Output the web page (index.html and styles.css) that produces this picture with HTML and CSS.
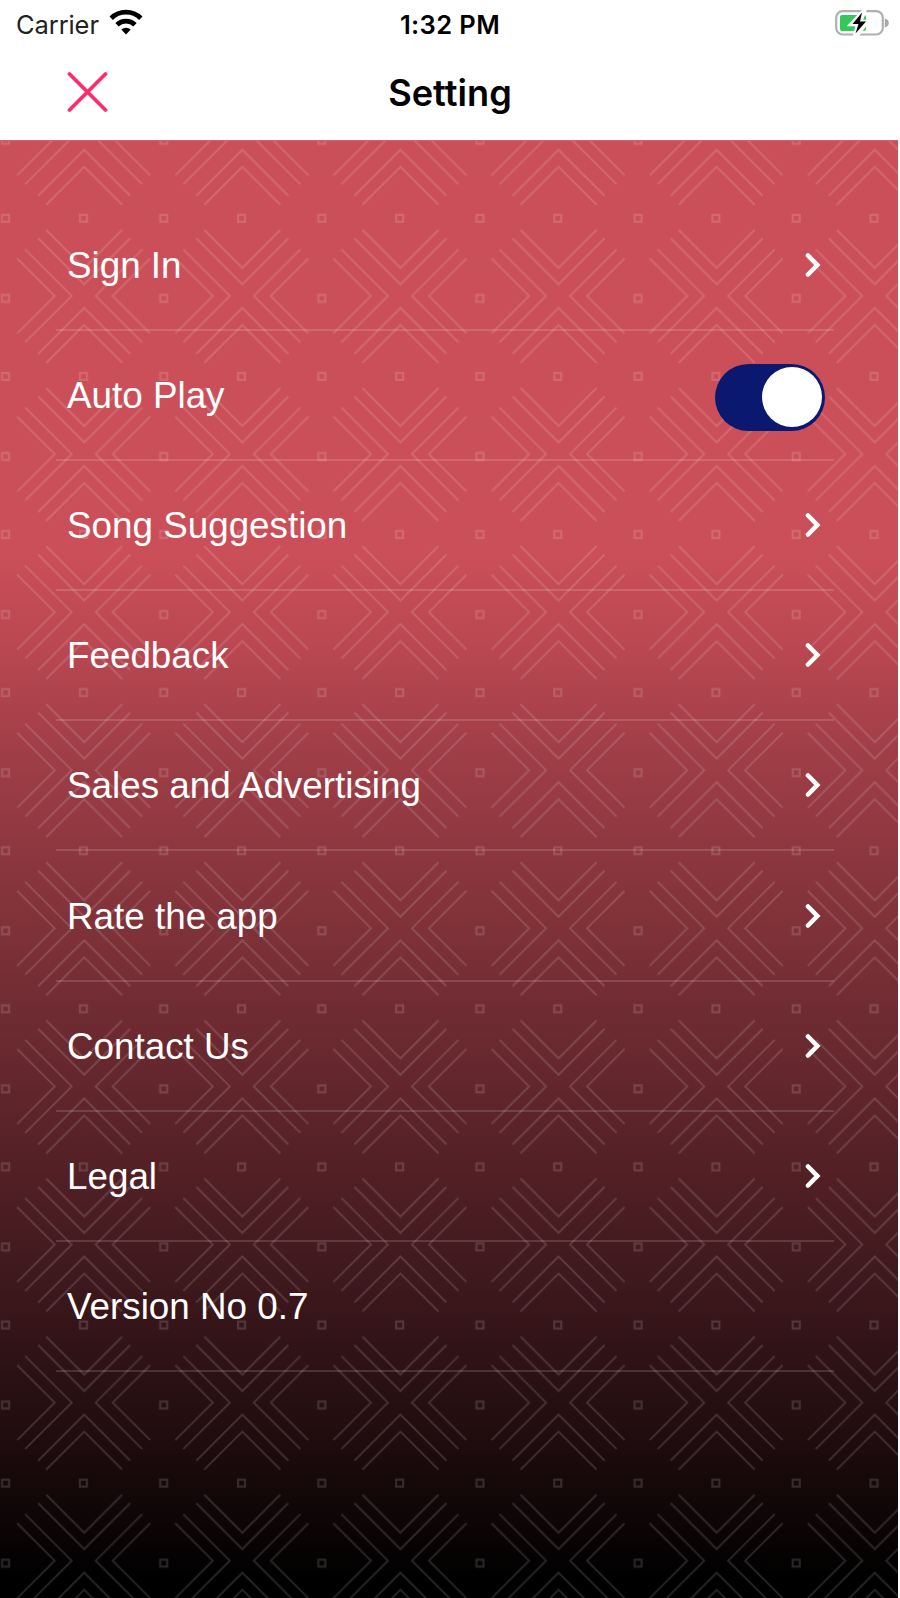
FILE: index.html
```
<!DOCTYPE html>
<html lang="en">
<head>
<meta charset="utf-8">
<title>Setting</title>
<link rel="stylesheet" href="styles.css">
</head>
<body>
<svg class="defs" width="0" height="0" aria-hidden="true">
  <symbol id="chevron" viewBox="0 0 16 26"><path d="M3 3.500l9.300 9.500L3 22.500" fill="none" stroke="#fff" stroke-width="4.600" stroke-linecap="round" stroke-linejoin="miter"/></symbol>
</svg>
<div class="screen">
  <div class="status">
    <div class="status-left">
      <span class="carrier">Carrier</span>
      <svg class="wifi" width="34" height="26" viewBox="0 0 34 26">
        <g fill="none" stroke="#000" stroke-width="4.800">
          <path d="M2.200 9.300a21 21 0 0 1 29.600 0"/>
          <path d="M8 15.800a12.800 12.800 0 0 1 18 0"/>
        </g>
        <path d="M12.300 20.600a6.700 6.700 0 0 1 9.400 0L17 25.500z"/>
      </svg>
    </div>
    <span class="time">1:32 PM</span>
    <svg class="battery" width="54" height="28" viewBox="0 0 54 28">
      <rect x="1.200" y="2.200" width="46.600" height="23.300" rx="6.500" fill="none" stroke="#b0b0b0" stroke-width="2.200"/>
      <path d="M49.800 9.500q4 1 4 4.400t-4 4.400z" fill="#a9a9a9"/>
      <rect x="5" y="6" width="26" height="16" rx="2" fill="#34c759"/>
      <path d="M28.500 1L14.500 16h7.500l-3 11h3.500L33.500 12h-7l4-11z" fill="#fff" stroke="#fff" stroke-width="2.500"/>
      <path d="M27 3.500L17.500 15h6l-3 9.500L31 12.500h-6z" fill="#000"/>
    </svg>
  </div>
  <header class="nav">
    <svg class="close" width="42" height="42" viewBox="0 0 42 42"><path d="M3.500 3l36 36M39.500 3l-36 36" stroke="#fb2c6b" stroke-width="3.800" stroke-linecap="round"/></svg>
    <h1 class="title">Setting</h1>
  </header>
  <main class="panel">
    <svg class="motif" width="898" height="1458" aria-hidden="true">
      <defs>
        <pattern id="weave" width="158.120" height="158.100" patternUnits="userSpaceOnUse" patternTransform="translate(14.200 84.900)">
          <g transform="translate(70 70)" fill="none" stroke="#fff" stroke-width="2">
            <path d="M-38-66L0-28 38-66M-46-57.500L0-11.500 46-57.500"/>
            <path d="M-38 67L0 29 38 67M-46 58L0 12 46 58"/>
            <path d="M66-37.500L28.500 0 66 37.500M58-46.500L11.500 0 58 46.500"/>
            <path d="M-67-37.500L-29.500 0-67 37.500M-59-46.500L-12.500 0-59 46.500"/>
            <path d="M76-1h7v7h-7zM76 77h7v7h-7zM-4.300 77h7v7h-7z" stroke-width="2.200"/>
          </g>
        </pattern>
      </defs>
      <rect width="898" height="1458" fill="url(#weave)"/>
    </svg>
    <ul class="list">
      <li class="row"><span>Sign In</span><svg class="chev"><use href="#chevron"/></svg></li>
      <li class="row"><span>Auto Play</span><span class="switch"><span class="knob"></span></span></li>
      <li class="row"><span>Song Suggestion</span><svg class="chev"><use href="#chevron"/></svg></li>
      <li class="row"><span>Feedback</span><svg class="chev"><use href="#chevron"/></svg></li>
      <li class="row"><span>Sales and Advertising</span><svg class="chev"><use href="#chevron"/></svg></li>
      <li class="row"><span>Rate the app</span><svg class="chev"><use href="#chevron"/></svg></li>
      <li class="row"><span>Contact Us</span><svg class="chev"><use href="#chevron"/></svg></li>
      <li class="row"><span>Legal</span><svg class="chev"><use href="#chevron"/></svg></li>
      <li class="row"><span>Version No 0.7</span></li>
    </ul>
  </main>
</div>
</body>
</html>
```
FILE: styles.css
```
* { box-sizing: border-box; }
body { margin: 0; background: #fff; }
.defs { display: block; }
.screen { width: 900px; height: 1598px; overflow: hidden; display: flex; flex-direction: column; font-family: Inter, "Liberation Sans", sans-serif; color: #000; }
.status { height: 48px; display: grid; grid-template-columns: 1fr auto 1fr; align-items: center; padding: 0 11px 0 16px; }
.status-left { display: flex; align-items: center; gap: 10px; }
.carrier { font-size: 25.5px; letter-spacing: -0.1px; color: #222; }
.wifi { margin-top: -4px; }
.time { margin-left: -5px; font-size: 25.5px; font-weight: 600; letter-spacing: 0.4px; }
.battery { justify-self: end; margin-top: -3px; }
.nav { height: 92px; display: grid; grid-template-columns: 1fr auto 1fr; align-items: center; padding: 0 0 3px 66px; }
.nav::after { content: ""; margin-right: 66px; }
.close { margin-top: -2px; }
.title { margin: 0 0 0 -66px; font-size: 36.2px; font-weight: 600; line-height: 44px; }
.panel { position: relative; width: 898px; flex: 1; border-top: 1px solid #d0646d; background: linear-gradient(#cb4f59 0, #cb4f59 410px, #b94751 510px, #a03e47 610px, #38161a 1170px, #1f0c0e 1300px, #000 1440px); }
.motif { position: absolute; inset: 0; opacity: 0.14; }
.list { position: relative; list-style: none; margin: 0; padding: 60px 64px 0 56px; }
.row { height: 130.1px; display: flex; align-items: center; justify-content: space-between; padding: 0 8px 0 11px; border-bottom: 2px solid rgba(255, 255, 255, 0.14); color: #fff; font-family: "Liberation Sans", Arial, sans-serif; font-size: 36.8px; line-height: 44px; }
.row > span:first-child { padding-top: 2px; }
.chev { width: 16px; height: 26px; margin-right: 5px; }
.switch { width: 110px; height: 67px; margin: 4px 1px 0 0; border-radius: 34px; background: #0b1870; padding: 3.5px; display: flex; justify-content: flex-end; }
.knob { width: 60px; height: 60px; border-radius: 50%; background: #fff; }
```
